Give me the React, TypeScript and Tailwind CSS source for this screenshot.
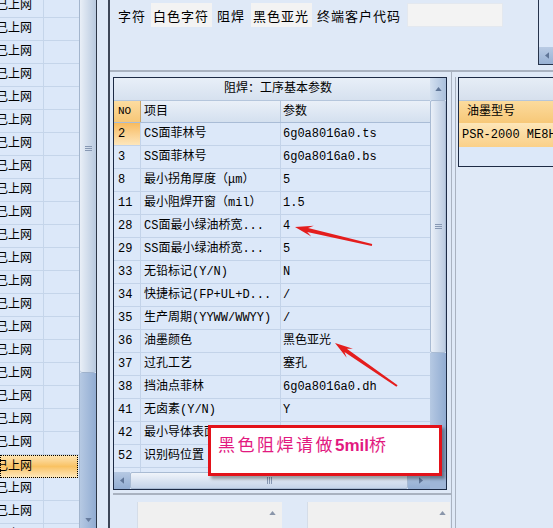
import React from "react";

const leftRows = Array.from({ length: 24 }, (_, i) => i);

const params: [string, string, string][] = [
  ["2", "CS面菲林号", "6g0a8016a0.ts"],
  ["3", "SS面菲林号", "6g0a8016a0.bs"],
  ["8", "最小拐角厚度（μm）", "5"],
  ["11", "最小阻焊开窗（mil）", "1.5"],
  ["28", "CS面最小绿油桥宽...", "4"],
  ["29", "SS面最小绿油桥宽...", "5"],
  ["33", "无铅标记(Y/N)", "N"],
  ["34", "快捷标记(FP+UL+D...", "/"],
  ["35", "生产周期(YYWW/WWYY)", "/"],
  ["36", "油墨颜色", "黑色亚光"],
  ["37", "过孔工艺", "塞孔"],
  ["38", "挡油点菲林", "6g0a8016a0.dh"],
  ["41", "无卤素(Y/N)", "Y"],
  ["42", "最小导体表面...", ""],
  ["52", "识别码位置", ""],
  ["53", "", ""],
];

function Tri({ dir, className }: { dir: "up" | "down" | "left" | "right"; className?: string }) {
  const pts = { up: "0,5 4,0 8,5", down: "0,0 8,0 4,5", left: "5,0 5,8 0,4", right: "0,0 0,8 5,4" }[dir];
  const vb = dir === "up" || dir === "down" ? "0 0 8 5" : "0 0 5 8";
  return (
    <svg viewBox={vb} className={className}>
      <polygon points={pts} fill="currentColor" />
    </svg>
  );
}

function GripH() {
  return (
    <div className="flex flex-col gap-[1px]">
      <div className="h-[1px] w-[7px] bg-[#8798b3]" />
      <div className="h-[1px] w-[7px] bg-[#8798b3]" />
      <div className="h-[1px] w-[7px] bg-[#8798b3]" />
    </div>
  );
}

function GripV() {
  return (
    <div className="flex gap-[1px]">
      <div className="h-[7px] w-[1px] bg-[#8798b3]" />
      <div className="h-[7px] w-[1px] bg-[#8798b3]" />
      <div className="h-[7px] w-[1px] bg-[#8798b3]" />
    </div>
  );
}

function arrowPoints(x1: number, y1: number, x2: number, y2: number) {
  const dx = x2 - x1;
  const dy = y2 - y1;
  const len = Math.hypot(dx, dy);
  const ux = dx / len;
  const uy = dy / len;
  const nx = -uy;
  const ny = ux;
  const h = 18;
  const w = 5.5;
  const bx = x2 - ux * h;
  const by = y2 - uy * h;
  const jx = bx + ux * 5;
  const jy = by + uy * 5;
  const p = (x: number, y: number) => `${x.toFixed(1)},${y.toFixed(1)}`;
  return [
    p(x1 + nx, y1 + ny),
    p(jx + nx * 2, jy + ny * 2),
    p(bx + nx * w, by + ny * w),
    p(x2, y2),
    p(bx - nx * w, by - ny * w),
    p(jx - nx * 2, jy - ny * 2),
    p(x1 - nx, y1 - ny),
  ].join(" ");
}

const mono = "font-['Liberation_Mono','Noto_Sans_CJK_SC',monospace]";

export default function App() {
  return (
    <div className="relative flex h-[528px] w-[553px] overflow-hidden bg-[#dfe9f7] font-['Noto_Sans_CJK_SC',sans-serif] text-black">
      {/* left list */}
      <div className="flex w-[97px] shrink-0">
        <div className={`w-[80px] overflow-hidden border-r border-[#a3b5cd] bg-[#dce8f9] text-[12px] ${mono}`}>
          <div className="-mt-[5px]">
            {leftRows.map((i) =>
              i === 20 ? (
                <div
                  key={i}
                  className="flex h-[23px] w-[78px] items-center border border-dotted border-black bg-linear-to-b from-[#fde3b0] via-[#f9c262] to-[#fde6b8]"
                >
                  <span className="-ml-[5px] leading-none">已上网</span>
                </div>
              ) : (
                <div key={i} className="flex h-[23px] border-b border-[#c5d5ea]">
                  <div className="flex w-[44px] items-center border-r border-[#c5d5ea]">
                    <span className="-ml-[4px] leading-none">已上网</span>
                  </div>
                  <div className="flex-1" />
                </div>
              )
            )}
          </div>
        </div>
        <div className="flex w-[17px] flex-col border-r border-[#2c3646]">
          <div className="flex h-[373px] flex-col items-center rounded-b-[3px] border-b border-[#9fb2cc] bg-linear-to-r from-[#e9eff7] to-[#b8c9df] pt-[146px]">
            <GripH />
          </div>
          <div className="flex flex-1 flex-col items-center justify-end bg-linear-to-r from-[#b6c9e3] to-[#91acd2] pb-[6px] text-[#667b9d]">
            <Tri dir="down" className="h-[4px] w-[7px]" />
          </div>
        </div>
      </div>

      {/* splitter */}
      <div className="w-[13px] shrink-0 border-r-2 border-[#3d4657]" />

      {/* right area */}
      <div className="flex flex-1 flex-col">
        {/* top bar */}
        <div className="flex h-[72px] border-b-2 border-[#a9b2c0]">
          <div className="mt-[3px] flex h-[24px] items-center pl-[8px] text-[13px] leading-none tracking-[1px]">
            <span>字符</span>
            <div className="ml-[5px] flex h-[24px] w-[61px] items-center bg-[#f3f3f3] pl-[2px]">白色字符</div>
            <span className="ml-[5px]">阻焊</span>
            <div className="ml-[6px] flex h-[24px] w-[61px] items-center bg-[#f3f3f3] pl-[2px]">黑色亚光</div>
            <span className="ml-[5px]">终端客户代码</span>
            <div className="ml-[6px] h-[24px] w-[96px] border border-[#e3e8ef] bg-[#f3f3f3]" />
          </div>
          <div className="ml-auto flex h-[65px] w-[40px] flex-col justify-end border-b border-l border-[#26334b] bg-[#dce8f9]">
            <div className="flex h-[17px]">
              <div className="flex w-[16px] items-center justify-center bg-linear-to-b from-[#b9cbe4] to-[#98b1d4] text-[#5f7597]">
                <Tri dir="left" className="h-[7px] w-[4px]" />
              </div>
              <div className="flex-1 rounded-l-[2px] bg-linear-to-b from-[#f1f5fa] to-[#c6d5ea]" />
            </div>
          </div>
        </div>

        <div className="flex flex-1">
          {/* middle column */}
          <div className="flex w-[342px] flex-col border-r border-[#a9b2c0] pl-[3px] pt-[5px]">
            <div className="flex h-[413px] w-[334px] border border-[#1d2b45] bg-[#dce8f9]">
              <div className={`flex w-[316px] flex-col text-[12px] leading-none ${mono}`}>
                <div className="flex h-[23px] items-center justify-center border-b border-[#b5c6dc] bg-linear-to-b from-[#e8eff8] to-[#d6e1ef] pl-[12px]">
                  阻焊：工序基本参数
                </div>
                <div className="flex h-[22px] border-b border-[#a9bcd6] bg-linear-to-b from-[#eaf0f8] to-[#d4e0ef]">
                  <div className="flex w-[27px] items-center border-r border-[#c9a56a] bg-linear-to-b from-[#fcdca0] to-[#f6c777] pl-[4px] text-[11px]">
                    NO
                  </div>
                  <div className="flex w-[140px] items-center border-r border-[#b7c8de] pl-[3px]">项目</div>
                  <div className="flex flex-1 items-center pl-[2px]">参数</div>
                </div>
                <div className="h-[349px] overflow-hidden">
                  {params.map(([no, item, val], i) => (
                    <div key={no} className="flex h-[23px] border-b border-[#c3d3e9]">
                      <div
                        className={`flex w-[27px] items-center border-r border-[#c3d3e9] pl-[4px] ${
                          i === 0 ? "bg-linear-to-b from-[#f7bb5e] to-[#fde6bb]" : ""
                        }`}
                      >
                        {no}
                      </div>
                      <div className="flex w-[140px] items-center whitespace-nowrap border-r border-[#c3d3e9] pl-[3px]">
                        {item}
                      </div>
                      <div className="flex flex-1 items-center whitespace-nowrap pl-[2px]">{val}</div>
                    </div>
                  ))}
                </div>
                <div className="flex h-[17px]">
                  <div className="flex w-[16px] items-center justify-center bg-linear-to-b from-[#b6c9e3] to-[#93aed3] text-[#5f7597]">
                    <Tri dir="left" className="h-[7px] w-[4px]" />
                  </div>
                  <div className="flex w-[278px] items-center justify-center rounded-[2px] border border-[#a9bbd3] bg-linear-to-b from-[#f0f4fa] to-[#c5d4e9]">
                    <GripV />
                  </div>
                  <div className="flex flex-1 items-center justify-end bg-linear-to-b from-[#b6c9e3] to-[#93aed3] pr-[7px] text-[#5f7597]">
                    <Tri dir="right" className="h-[7px] w-[4px]" />
                  </div>
                </div>
              </div>
              <div className="flex w-[16px] flex-col">
                <div className="flex h-[22px] items-center justify-center bg-linear-to-r from-[#d3e0f0] to-[#a9bfdc] text-[#5f7597]">
                  <Tri dir="up" className="h-[4px] w-[7px]" />
                </div>
                <div className="flex h-[253px] items-center justify-center rounded-[2px] border border-[#a9bbd3] bg-linear-to-r from-[#eaf0f8] to-[#bccce2]">
                  <GripH />
                </div>
                <div className="flex-1 bg-linear-to-r from-[#b6c9e3] to-[#91acd2]" />
                <div className="h-[17px] bg-[#9fb6d8]" />
              </div>
            </div>
            <div className="h-[5px] border-b-2 border-[#a9b2c0]" />
            <div className="flex flex-1 pt-[7px]">
              <div className="ml-[24px] flex w-[145px] justify-end border-l border-[#d5dde8] bg-[#f0f0f0] pr-[6px] pt-[9px] text-[#8a96aa]">
                <Tri dir="up" className="h-[4px] w-[7px]" />
              </div>
              <div className="ml-[25px] flex w-[143px] justify-end border-l border-[#d5dde8] bg-[#f0f0f0] pr-[4px] pt-[9px] text-[#8a96aa]">
                <Tri dir="up" className="h-[4px] w-[7px]" />
              </div>
            </div>
          </div>

          {/* right column */}
          <div className="flex-1 pl-[3px] pt-[5px]">
            <div className="h-full border-l border-[#a9b2c0] pl-[2px]">
              <div className={`flex h-[90px] w-[120px] flex-col border border-[#1d2b45] bg-[#dce8f9] text-[12px] leading-none ${mono}`}>
                <div className="h-[23px] border-b border-[#b5c6dc] bg-linear-to-b from-[#e6edf6] to-[#d6e0ed]" />
                <div className="flex h-[22px] items-center bg-linear-to-b from-[#fcdb9d] to-[#f7c878] pl-[8px]">油墨型号</div>
                <div className="flex h-[24px] items-center whitespace-nowrap bg-linear-to-b from-[#fde6b8] to-[#fad089] pl-[3px]">
                  PSR-2000 ME8HTR
                </div>
                <div className="flex-1" />
              </div>
            </div>
          </div>
        </div>
      </div>

      {/* annotation overlay */}
      <svg className="pointer-events-none absolute left-0 top-0 h-[528px] w-[553px]" viewBox="0 0 553 528">
        <polygon points={arrowPoints(372, 245, 295, 227)} fill="#e41d1d" />
        <polygon points={arrowPoints(397, 386, 335, 343)} fill="#e41d1d" />
      </svg>
      <div className="absolute left-[208px] top-[425px] h-[51px] w-[234px] border-[3px] border-[#e3121a] bg-white pl-[7px] pt-[4px] shadow-[3px_3px_3px_rgba(0,0,0,0.35)]">
        <span className="font-['Liberation_Sans','Noto_Sans_CJK_SC',sans-serif] text-[17px] leading-none text-[#e2197f]">
          <span className="tracking-[2.5px]">黑色阻焊请做</span>
          <span className="font-bold">5mil</span>
          <span>桥</span>
        </span>
      </div>
    </div>
  );
}
